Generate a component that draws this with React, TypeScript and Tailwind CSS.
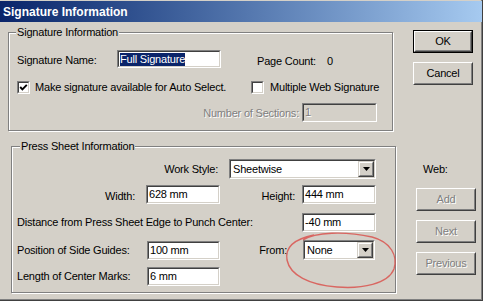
import React from "react";

const Field = ({ className, children, disabled }: { className: string; children?: React.ReactNode; disabled?: boolean }) => (
  <div className={`${className} shrink-0 border border-t-[#808080] border-l-[#808080] border-b-white border-r-white`}>
    <div
      className={`h-full w-full border border-t-[#404040] border-l-[#404040] border-b-[#d4d0c8] border-r-[#d4d0c8] flex items-center pl-[1px] whitespace-nowrap overflow-hidden ${
        disabled ? "bg-[#d4d0c8] text-[#808080]" : "bg-white text-black"
      }`}
    >
      {children}
    </div>
  </div>
);

const Select = ({ className, value }: { className: string; value: string }) => (
  <div className={`${className} shrink-0 border border-t-[#808080] border-l-[#808080] border-b-white border-r-white`}>
    <div className="h-full w-full border border-t-[#404040] border-l-[#404040] border-b-[#d4d0c8] border-r-[#d4d0c8] bg-white flex items-stretch">
      <div className="flex-1 flex items-center pl-[2px] whitespace-nowrap">{value}</div>
      <div className="w-[16px] border border-t-[#d4d0c8] border-l-[#d4d0c8] border-b-[#404040] border-r-[#404040]">
        <div className="h-full w-full bg-[#d4d0c8] border border-t-white border-l-white border-b-[#808080] border-r-[#808080] flex items-center justify-center">
          <svg width="7" height="4" viewBox="0 0 7 4">
            <path d="M0 0 H7 L3.5 4 Z" fill="#000" />
          </svg>
        </div>
      </div>
    </div>
  </div>
);

const Checkbox = ({ checked }: { checked?: boolean }) => (
  <div className="w-[13px] h-[13px] shrink-0 border border-t-[#808080] border-l-[#808080] border-b-white border-r-white">
    <div className="h-full w-full bg-white border border-t-[#404040] border-l-[#404040] border-b-[#d4d0c8] border-r-[#d4d0c8] flex items-center justify-center">
      {checked && (
        <svg width="9" height="9" viewBox="0 0 9 9">
          <polyline points="1.2,4 3.4,6.3 7.8,1.8" fill="none" stroke="#000" strokeWidth="1.9" />
        </svg>
      )}
    </div>
  </div>
);

const Button = ({ label, className, isDefault, disabled }: { label: string; className: string; isDefault?: boolean; disabled?: boolean }) => {
  const face = (
    <div className="h-full w-full border border-t-white border-l-white border-b-[#404040] border-r-[#404040]">
      <div
        className={`h-full w-full border border-t-[#d4d0c8] border-l-[#d4d0c8] border-b-[#808080] border-r-[#808080] flex items-center justify-center ${
          disabled ? "text-[#808080] [text-shadow:1px_1px_0_#fff]" : "text-black"
        }`}
      >
        {label}
      </div>
    </div>
  );
  return (
    <div className={`${className} shrink-0 ${isDefault ? "border border-black" : ""}`}>{face}</div>
  );
};

const Group = ({ className, legend, legendClass, children }: { className: string; legend: string; legendClass: string; children: React.ReactNode }) => (
  <div className={`${className} relative border border-[#808080] shadow-[inset_1px_1px_0_#fff,1px_1px_0_#fff]`}>
    <span className={`absolute top-[-8px] ${legendClass} h-[15px] leading-[15px] bg-[#d4d0c8] px-[1px] whitespace-nowrap`}>{legend}</span>
    {children}
  </div>
);

export default function App() {
  return (
    <div className="w-[488px] h-[305px] bg-white overflow-hidden relative font-['Liberation_Sans',Arial,sans-serif] text-[11px] tracking-[-0.2px] text-black leading-none">
      <div className="w-[483px] h-[301px] bg-[#d4d0c8] pt-[1px] border-r border-b border-[#404040] shadow-[inset_-1px_-1px_0_#808080]">
        {/* Title bar */}
        <div className="h-[21px] bg-gradient-to-r from-[#0a246a] to-[#a6caf0] flex items-center pl-[3px]">
          <span className="text-white font-bold text-[12px] tracking-[0px]">Signature Information</span>
        </div>

        {/* Body */}
        <div className="flex">
          <div className="w-[396px] pt-[10px] shrink-0">
            <Group className="ml-[8px] w-[385px] h-[99px]" legend="Signature Information" legendClass="left-[7px]">
              <div className="pt-[17px]">
                <div className="flex items-center h-[18px]">
                  <span className="ml-[8px] w-[100px] pt-[3px]">Signature Name:</span>
                  <Field className="w-[104px] h-[18px]">
                    <span className="bg-[#0a246a] text-white h-[13px] leading-[13px] px-[0px]">Full Signature</span>
                  </Field>
                  <span className="ml-[36px] pt-[5px]">Page Count:</span>
                  <span className="ml-[11px] pt-[5px]">0</span>
                </div>
                <div className="flex items-center h-[15px] mt-[12px]">
                  <div className="ml-[8px] w-[234px] flex items-center">
                    <Checkbox checked />
                    <span className="ml-[5px]">Make signature available for Auto Select.</span>
                  </div>
                  <Checkbox />
                  <span className="ml-[6px]">Multiple Web Signature</span>
                </div>
                <div className="flex items-center h-[19px] mt-[8px]">
                  <span className="w-[293px] pr-[3px] text-right text-[#808080] [text-shadow:1px_1px_0_#fff] pt-[2px]">Number of Sections:</span>
                  <Field className="w-[75px] h-[19px]" disabled>
                    <span className="[text-shadow:1px_1px_0_#fff]">1</span>
                  </Field>
                </div>
              </div>
            </Group>

            <Group className="ml-[11px] mt-[15px] w-[385px] h-[147px]" legend="Press Sheet Information" legendClass="left-[8px]">
              <div className="pt-[12px]">
                <div className="flex items-center h-[20px]">
                  <span className="w-[217px] pr-[11px] text-right">Work Style:</span>
                  <Select className="w-[147px] h-[20px]" value="Sheetwise" />
                </div>
                <div className="flex items-center h-[19px] mt-[6px]">
                  <span className="w-[134px] pr-[11px] text-right pt-[3px]">Width:</span>
                  <Field className="w-[74px] h-[19px]">628 mm</Field>
                  <span className="w-[82px] pr-[7px] text-right pt-[3px]">Height:</span>
                  <Field className="w-[74px] h-[19px]">444 mm</Field>
                </div>
                <div className="flex items-center h-[19px] mt-[9px]">
                  <span className="w-[290px] pl-[5px]">Distance from Press Sheet Edge to Punch Center:</span>
                  <Field className="w-[74px] h-[19px]">-40 mm</Field>
                </div>
                <div className="flex items-center h-[20px] mt-[8px]">
                  <span className="w-[135px] pl-[5px]">Position of Side Guides:</span>
                  <Field className="w-[73px] h-[19px]">100 mm</Field>
                  <span className="w-[83px] pr-[16px] text-right">From:</span>
                  <Select className="w-[72px] h-[20px]" value="None" />
                </div>
                <div className="flex items-center h-[19px] mt-[7px]">
                  <span className="w-[135px] pl-[5px]">Length of Center Marks:</span>
                  <Field className="w-[73px] h-[19px]">6 mm</Field>
                </div>
              </div>
            </Group>
          </div>

          <div className="flex-1 pt-[8px] flex flex-col">
            <Button label="OK" className="ml-[17px] w-[60px] h-[23px]" isDefault />
            <Button label="Cancel" className="ml-[17px] mt-[9px] w-[60px] h-[23px]" />
            <span className="ml-[27px] mt-[78px] h-[13px] leading-[13px]">Web:</span>
            <Button label="Add" className="ml-[20px] mt-[12px] w-[60px] h-[23px]" disabled />
            <Button label="Next" className="ml-[20px] mt-[9px] w-[60px] h-[23px]" disabled />
            <Button label="Previous" className="ml-[20px] mt-[9px] w-[60px] h-[23px]" disabled />
          </div>
        </div>
      </div>

      {/* Hand-drawn red annotation */}
      <svg className="absolute left-0 top-0 pointer-events-none" width="488" height="305" viewBox="0 0 488 305">
        <path
          d="M303 240 C315 232 345 231 372 237 C391 242 398 256 394 269 C388 284 362 289 337 287 C309 285 290 275 287 260 C285 248 294 239 314 235"
          fill="none"
          stroke="#d9534f"
          strokeWidth="1.4"
          strokeOpacity="0.85"
        />
      </svg>
    </div>
  );
}
